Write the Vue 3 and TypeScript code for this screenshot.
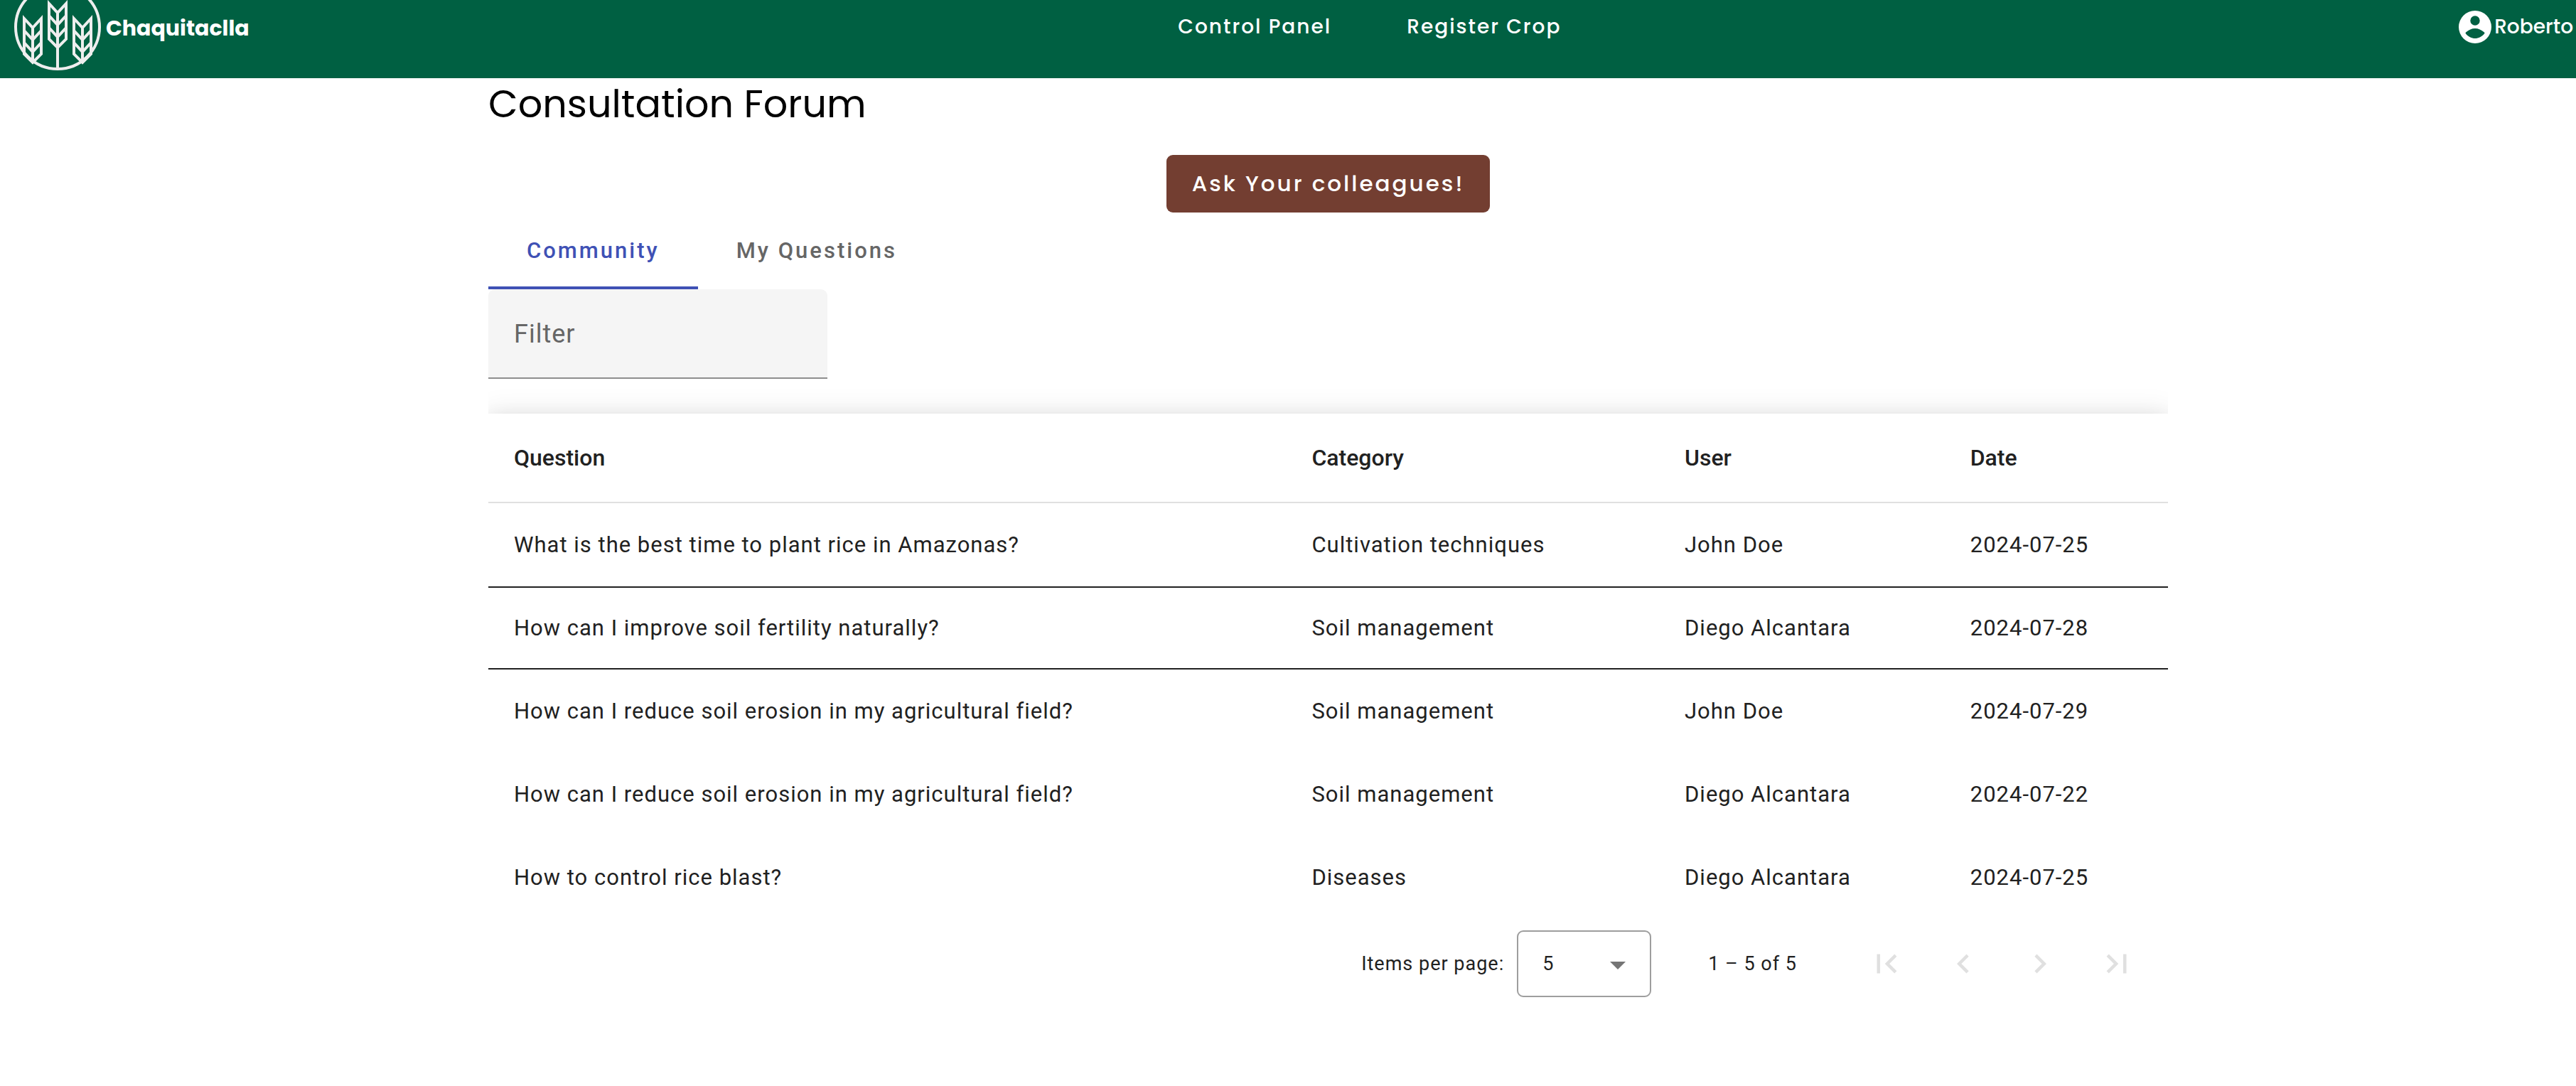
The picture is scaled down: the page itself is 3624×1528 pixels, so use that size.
<script setup lang="ts">
import { computed, ref } from 'vue'

interface Question {
  question: string
  category: string
  user: string
  date: string
}

const questions: Question[] = [
  { question: 'What is the best time to plant rice in Amazonas?', category: 'Cultivation techniques', user: 'John Doe', date: '2024-07-25' },
  { question: 'How can I improve soil fertility naturally?', category: 'Soil management', user: 'Diego Alcantara', date: '2024-07-28' },
  { question: 'How can I reduce soil erosion in my agricultural field?', category: 'Soil management', user: 'John Doe', date: '2024-07-29' },
  { question: 'How can I reduce soil erosion in my agricultural field?', category: 'Soil management', user: 'Diego Alcantara', date: '2024-07-22' },
  { question: 'How to control rice blast?', category: 'Diseases', user: 'Diego Alcantara', date: '2024-07-25' },
]

const tabs = ['Community', 'My Questions']
const activeTab = ref('Community')
const filter = ref('')
const pageSize = ref(5)

const rows = computed(() => {
  const term = filter.value.trim().toLowerCase()
  return questions.filter((q) => Object.values(q).join(' ').toLowerCase().includes(term))
})

const pagers = [
  { label: 'First page', path: 'M18.41 16.59L13.82 12l4.59-4.59L17 6l-6 6 6 6zM6 6h2v12H6z' },
  { label: 'Previous page', path: 'M15.41 7.41L14 6l-6 6 6 6 1.41-1.41L10.83 12z' },
  { label: 'Next page', path: 'M10 6L8.59 7.41 13.17 12l-4.58 4.59L10 18l6-6z' },
  { label: 'Last page', path: 'M5.59 7.41L10.18 12l-4.59 4.59L7 18l6-6-6-6zM16 6h2v12h-2z' },
]
</script>

<template>
  <header class="toolbar">
    <a href="#" class="brand">
      <svg class="brand-mark" width="124" height="100" viewBox="19 0 124 100" fill="none" stroke="#eeeeee" stroke-width="4" aria-hidden="true">
        <circle cx="81" cy="38" r="59" />
        <defs>
          <g id="wheat">
            <path d="M-12 5V55L0 67L12 55V5L0 18ZM-12 22L0 35L12 22M-12 39L0 52L12 39M0 18V67" />
          </g>
        </defs>
        <use href="#wheat" x="81" y="0" />
        <path d="M81 66V96" />
        <use href="#wheat" x="46" y="21" />
        <use href="#wheat" x="116" y="21" />
      </svg>
      <span class="brand-name">Chaquitaclla</span>
    </a>
    <nav class="links">
      <a href="#">Control Panel</a>
      <a href="#">Register Crop</a>
    </nav>
    <a href="#" class="account">
      <svg width="46" height="46" viewBox="0 0 46 46" aria-hidden="true">
        <path fill="#fff" fill-rule="evenodd" d="M23 0a23 23 0 1 0 0 46a23 23 0 1 0 0-46zM23 7.300a6.700 6.700 0 1 1 0 13.400a6.700 6.700 0 1 1 0-13.400zM10 30.500C14 27 18.500 25 23 25s9 2 13 5.500q1 1 0 2C32.500 36.500 28 39 23 39s-9.500-2.500-13-6.500q-1-1 0-2z" />
      </svg>
      <span>Roberto</span>
    </a>
  </header>

  <main class="page">
    <div class="forum">
      <h1>Consultation Forum</h1>
      <button type="button" class="ask">Ask Your colleagues!</button>

      <div class="tabs" role="tablist">
        <button
          v-for="tab in tabs"
          :key="tab"
          type="button"
          role="tab"
          class="tab"
          :class="{ active: tab === activeTab }"
          :aria-selected="tab === activeTab"
          @click="activeTab = tab"
        >{{ tab }}</button>
      </div>

      <input v-model="filter" class="filter" type="text" placeholder="Filter" aria-label="Filter" />

      <div class="table-wrap">
        <table>
          <thead>
            <tr>
              <th class="col-question" scope="col">Question</th>
              <th class="col-category" scope="col">Category</th>
              <th class="col-user" scope="col">User</th>
              <th scope="col">Date</th>
            </tr>
          </thead>
          <tbody>
            <tr v-for="(row, i) in rows" :key="i">
              <td>{{ row.question }}</td>
              <td>{{ row.category }}</td>
              <td>{{ row.user }}</td>
              <td>{{ row.date }}</td>
            </tr>
          </tbody>
        </table>

        <div class="paginator">
          <label for="page-size">Items per page:</label>
          <div class="size">
            <select id="page-size" v-model="pageSize">
              <option :value="5">5</option>
              <option :value="10">10</option>
              <option :value="20">20</option>
            </select>
            <svg class="arrow" width="22" height="11" viewBox="0 0 22 11" aria-hidden="true"><path d="M0 0h22L11 11z" fill="#757575" /></svg>
          </div>
          <span class="range">1 – {{ rows.length }} of {{ rows.length }}</span>
          <button v-for="p in pagers" :key="p.label" type="button" class="pager" :aria-label="p.label" disabled>
            <svg width="54" height="54" viewBox="0 0 24 24" aria-hidden="true"><path :d="p.path" fill="#e0e0e0" /></svg>
          </button>
        </div>
      </div>
    </div>
  </main>
</template>

<style>
body {
  margin: 0;
  background: #fff;
}
</style>

<style scoped>
* {
  box-sizing: border-box;
}

.toolbar {
  display: flex;
  align-items: flex-start;
  justify-content: space-between;
  height: 110px;
  padding: 0 4px 0 19px;
  background: #006042;
  color: #fff;
  font: 500 28px/40px Poppins, Inter, sans-serif;
}

.toolbar a {
  color: inherit;
  text-decoration: none;
}

.brand {
  display: flex;
  gap: 6px;
}

.brand-mark {
  flex: none;
}

.brand-name {
  padding-top: 20px;
  font: 700 30px/40px Poppins, Lato, sans-serif;
}

.links {
  display: flex;
  gap: 106px;
  padding: 18px 0 0 44px;
  letter-spacing: 2px;
}

.account {
  display: flex;
  gap: 4px;
  padding-top: 15px;
}

.account span {
  padding-top: 3px;
}

.page {
  display: grid;
  grid-template-columns: 687fr 2363fr 574fr;
  color: #212121;
  font-family: Roboto, sans-serif;
}

.forum {
  grid-column: 2;
  min-width: 0;
}

h1 {
  margin: 0 0 36px;
  color: #000;
  font: 400 54px/72px Poppins, Inter, sans-serif;
}

.ask {
  display: block;
  height: 81px;
  margin: 0 auto;
  padding: 0 36px 2px;
  border: 0;
  border-radius: 9px;
  background: #733e31;
  color: #fff;
  font: 500 31px/40px Poppins, Inter, sans-serif;
  letter-spacing: 3px;
}

.tabs {
  display: flex;
  height: 108px;
}

.tab {
  padding: 0 54px;
  border: 0;
  border-bottom: 4px solid transparent;
  border-top: 4px solid transparent;
  background: none;
  color: #666;
  font: 500 31px/40px Roboto, sans-serif;
  letter-spacing: 3px;
}

.tab.active {
  border-bottom-color: #3f51b5;
  color: #3f51b5;
}

.filter {
  display: block;
  width: 477px;
  height: 126px;
  padding: 2px 36px 0;
  border: 0;
  border-bottom: 2px solid #8e8e8e;
  border-radius: 9px 9px 0 0;
  outline: 0;
  background: #f5f5f5;
  color: #212121;
  font: 400 36px/54px Roboto, sans-serif;
  letter-spacing: 1px;
}

.filter::placeholder {
  color: #666;
  opacity: 1;
}

.table-wrap {
  padding-top: 49px;
  overflow: hidden;
}

table {
  width: 100%;
  table-layout: fixed;
  border-collapse: separate;
  border-spacing: 0;
  background: #fff;
  box-shadow: 0 11px 18px -7px rgba(0, 0, 0, 0.2), 0 18px 32px 2px rgba(0, 0, 0, 0.14), 0 7px 40px 4px rgba(0, 0, 0, 0.12);
  font-size: 31px;
  line-height: 40px;
}

th,
td {
  height: 117px;
  padding: 0 36px;
  text-align: left;
  white-space: nowrap;
  letter-spacing: 1px;
}

th {
  height: 126px;
  border-bottom: 2px solid #e0e0e0;
  font-size: 32px;
  font-weight: 500;
  letter-spacing: 0;
}

.col-question {
  width: 47.5%;
}

.col-category {
  width: 22.2%;
}

.col-user {
  width: 17%;
}

tbody tr:nth-child(1) td {
  height: 119px;
  border-bottom: 2px solid #212121;
}

tbody tr:nth-child(2) td {
  height: 115px;
  border-bottom: 2px solid #212121;
}

.paginator {
  position: relative;
  display: flex;
  align-items: center;
  justify-content: flex-end;
  height: 126px;
  padding-right: 18px;
  background: #fff;
  font-size: 27px;
  line-height: 40px;
  letter-spacing: 1px;
}

.size {
  position: relative;
  width: 189px;
  margin: 0 80px 0 18px;
}

select {
  display: block;
  width: 100%;
  height: 94px;
  padding: 0 34px;
  border: 2px solid #9e9e9e;
  border-radius: 9px;
  appearance: none;
  background: none;
  color: #212121;
  font: 400 27px/40px Roboto, sans-serif;
}

.arrow {
  position: absolute;
  top: 44px;
  right: 36px;
  pointer-events: none;
}

.range {
  margin-right: 72px;
}

.pager {
  display: flex;
  align-items: center;
  justify-content: center;
  width: 108px;
  height: 108px;
  padding: 0;
  border: 0;
  background: none;
}
</style>
